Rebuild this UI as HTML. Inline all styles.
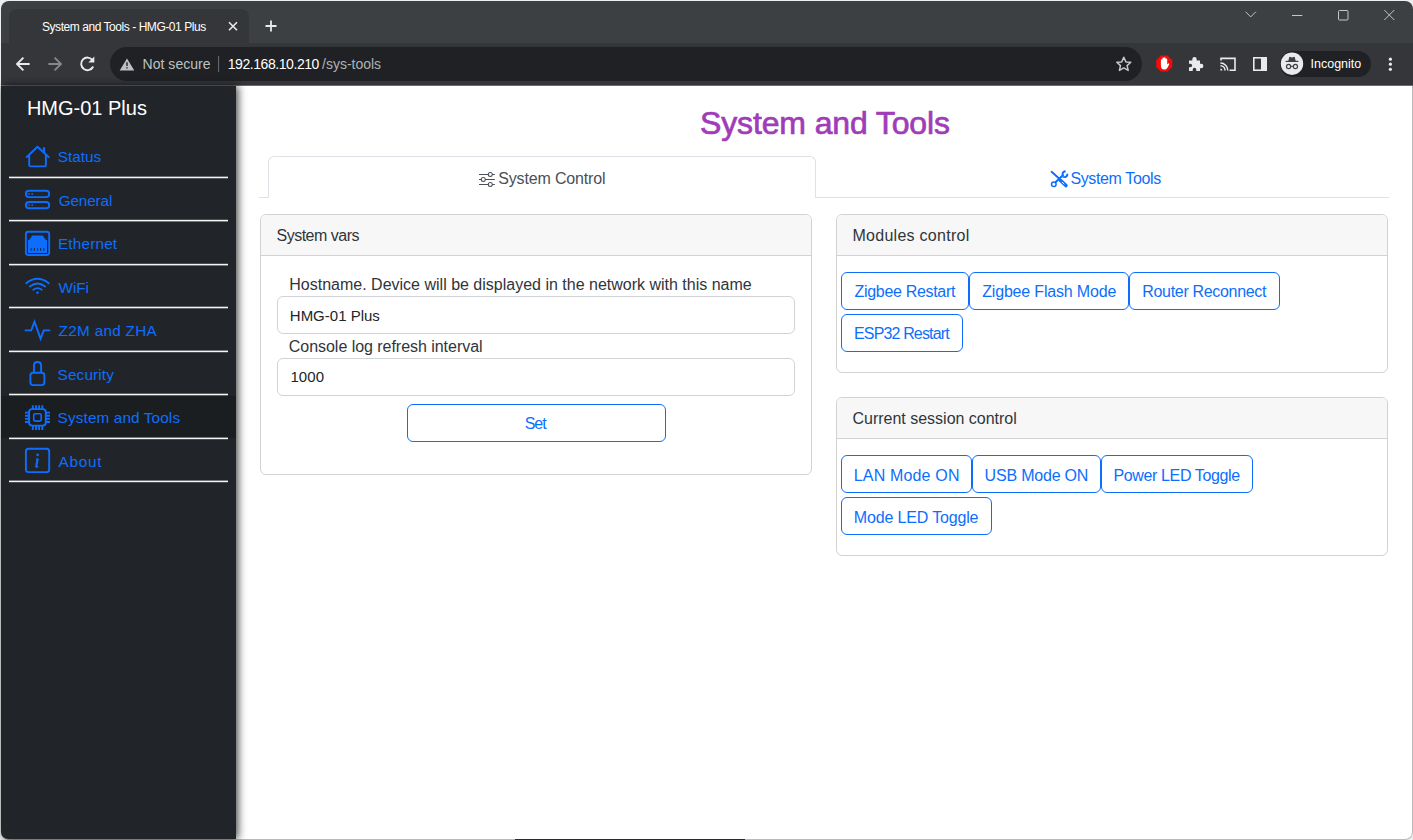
<!DOCTYPE html>
<html><head><meta charset="utf-8">
<style>
*{box-sizing:border-box;margin:0;padding:0}
html,body{width:1413px;height:840px;overflow:hidden;background:#eeeeee;font-family:"Liberation Sans",sans-serif;position:relative}
div,span{position:absolute}
.t{white-space:nowrap;line-height:1}
.nl{left:9px;width:219px;height:2px;background:#f0f0f0}
.card{border:1px solid #d2d2d2;border-radius:6px;background:#fff;overflow:hidden}
.hd{left:0;top:0;right:0;height:41px;background:#f7f7f7;border-bottom:1px solid #d2d2d2}
.btn{border:1px solid #0d6efd;border-radius:6px;height:38px}
.inp{border:1px solid #d0d4d8;border-radius:6px;background:#fff;height:38px}
</style></head><body>
<div style="left:1px;top:1px;width:1412px;height:85px;background:#3c4043;border-radius:8px 8px 0 0"></div>
<div style="left:9px;top:9px;width:240px;height:35px;background:#35363a;border-radius:8px 8px 0 0"></div>
<div style="left:1px;top:43px;width:1412px;height:42px;background:#35363a"></div>
<div style="left:110px;top:47px;width:1032px;height:34px;background:#202124;border-radius:17px"></div>
<div style="left:1280px;top:51px;width:91px;height:26px;background:#202124;border-radius:13px"></div>
<div style="left:1px;top:85px;width:1412px;height:1px;background:#686b70"></div>
<div style="left:1px;top:86px;width:1412px;height:754px;background:#fff;border-right:1px solid #b9b9b9;border-bottom:1px solid #b9b9b9;border-radius:0 0 8px 8px"></div>
<div style="left:515px;top:839px;width:230px;height:1px;background:#2a2a2e"></div>
<div style="left:1px;top:86px;width:235px;height:753px;background:#212529;box-shadow:2px 0 9px rgba(0,0,0,.75);border-radius:0 0 0 7px"></div>
<div style="left:1px;top:395.5px;width:235px;height:42.5px;background:#1b1e21"></div>
<svg width="240" height="500" viewBox="0 0 240 500" style="position:absolute;left:0;top:0"><g fill="#f4f4f4">
<rect x="9" y="176.65" width="219" height="1.6"/><rect x="9" y="219.8" width="219" height="1.6"/><rect x="9" y="263.8" width="219" height="1.6"/><rect x="9" y="306.7" width="219" height="1.6"/><rect x="9" y="350.6" width="219" height="1.6"/><rect x="9" y="393.7" width="219" height="1.6"/><rect x="9" y="437.6" width="219" height="1.6"/><rect x="9" y="480.6" width="219" height="1.6"/></g></svg>

<div style="left:259px;top:197px;width:1130px;height:1px;background:#dee2e6"></div>
<div style="left:268px;top:156px;width:548px;height:42px;border:1px solid #dee2e6;border-bottom:none;border-radius:6px 6px 0 0;background:#fff"></div>

<div class="card" style="left:260px;top:214px;width:552px;height:261px"><div class="hd"></div></div>
<div class="inp" style="left:277px;top:296px;width:518px"></div>
<div class="inp" style="left:277px;top:358px;width:518px"></div>
<div class="btn" style="left:407px;top:404px;width:259px"></div>

<div class="card" style="left:836px;top:214px;width:552px;height:159px"><div class="hd"></div></div>
<div class="btn" style="left:841px;top:272px;width:128px"></div>
<div class="btn" style="left:969px;top:272px;width:160px"></div>
<div class="btn" style="left:1129px;top:272px;width:151px"></div>
<div class="btn" style="left:841px;top:314px;width:122px"></div>

<div class="card" style="left:836px;top:397px;width:552px;height:159px"><div class="hd"></div></div>
<div class="btn" style="left:841px;top:455px;width:131px"></div>
<div class="btn" style="left:972px;top:455px;width:129px"></div>
<div class="btn" style="left:1101px;top:455px;width:152px"></div>
<div class="btn" style="left:841px;top:497px;width:151px"></div>

<span class="t" style="left:42.0px;top:20.6px;font-size:12px;letter-spacing:-0.448px;color:#fff;">System and Tools - HMG-01 Plus</span>
<span class="t" style="left:142.5px;top:57.2px;font-size:14px;letter-spacing:0.044px;color:#bdc1c6;">Not secure</span>
<span class="t" style="left:227.7px;top:57.3px;font-size:14px;letter-spacing:-0.431px;color:#fff;">192.168.10.210</span>
<span class="t" style="left:322.0px;top:57.3px;font-size:14px;letter-spacing:0.0px;color:#aeb2b6;">/sys-tools</span>
<span class="t" style="left:1310.5px;top:57.9px;font-size:12.5px;letter-spacing:0.0px;color:#fff;">Incognito</span>
<span class="t" style="left:26.9px;top:97.5px;font-size:20px;letter-spacing:0.0px;color:#fff;">HMG-01 Plus</span>
<span class="t" style="left:57.7px;top:149.0px;font-size:15.3px;letter-spacing:0.0px;color:#0d6efd;">Status</span>
<span class="t" style="left:58.7px;top:192.6px;font-size:15.3px;letter-spacing:-0.133px;color:#0d6efd;">General</span>
<span class="t" style="left:57.9px;top:236.0px;font-size:15.3px;letter-spacing:0.2px;color:#0d6efd;">Ethernet</span>
<span class="t" style="left:58.6px;top:279.9px;font-size:15.3px;letter-spacing:-0.133px;color:#0d6efd;">WiFi</span>
<span class="t" style="left:58.6px;top:323.2px;font-size:15.3px;letter-spacing:0.3px;color:#0d6efd;">Z2M and ZHA</span>
<span class="t" style="left:57.6px;top:366.8px;font-size:15.3px;letter-spacing:0.143px;color:#0d6efd;">Security</span>
<span class="t" style="left:57.6px;top:410.2px;font-size:15.3px;letter-spacing:0.133px;color:#0d6efd;">System and Tools</span>
<span class="t" style="left:58.6px;top:453.7px;font-size:15.3px;letter-spacing:0.75px;color:#0d6efd;">About</span>
<span class="t" style="left:700.0px;top:106.8px;font-size:32px;letter-spacing:-0.133px;color:#a03cb8;-webkit-text-stroke:0.7px #a03cb8">System and Tools</span>
<span class="t" style="left:498.2px;top:170.6px;font-size:16px;letter-spacing:-0.154px;color:#495057;">System Control</span>
<span class="t" style="left:1070.4px;top:171.0px;font-size:16px;letter-spacing:-0.364px;color:#0d6efd;">System Tools</span>
<span class="t" style="left:276.5px;top:227.7px;font-size:16px;letter-spacing:-0.5px;color:#30353a;">System vars</span>
<span class="t" style="left:289.3px;top:276.7px;font-size:16px;letter-spacing:0.0px;color:#30353a;">Hostname. Device will be displayed in the network with this name</span>
<span class="t" style="left:289.8px;top:307.5px;font-size:15px;letter-spacing:0.0px;color:#212529;">HMG-01 Plus</span>
<span class="t" style="left:288.8px;top:339.0px;font-size:16px;letter-spacing:-0.037px;color:#30353a;">Console log refresh interval</span>
<span class="t" style="left:290.4px;top:369.3px;font-size:15px;letter-spacing:0.133px;color:#212529;">1000</span>
<span class="t" style="left:524.7px;top:415.9px;font-size:16px;letter-spacing:-1.0px;color:#0d6efd;">Set</span>
<span class="t" style="left:852.5px;top:227.6px;font-size:16px;letter-spacing:0.271px;color:#30353a;">Modules control</span>
<span class="t" style="left:854.6px;top:283.9px;font-size:16px;letter-spacing:-0.323px;color:#0d6efd;">Zigbee Restart</span>
<span class="t" style="left:982.2px;top:283.9px;font-size:16px;letter-spacing:-0.175px;color:#0d6efd;">Zigbee Flash Mode</span>
<span class="t" style="left:1142.3px;top:283.9px;font-size:16px;letter-spacing:-0.32px;color:#0d6efd;">Router Reconnect</span>
<span class="t" style="left:854.0px;top:325.6px;font-size:16px;letter-spacing:-0.85px;color:#0d6efd;">ESP32 Restart</span>
<span class="t" style="left:852.5px;top:411.2px;font-size:16px;letter-spacing:-0.009px;color:#30353a;">Current session control</span>
<span class="t" style="left:853.8px;top:467.9px;font-size:16px;letter-spacing:0.16px;color:#0d6efd;">LAN Mode ON</span>
<span class="t" style="left:984.6px;top:467.9px;font-size:16px;letter-spacing:-0.2px;color:#0d6efd;">USB Mode ON</span>
<span class="t" style="left:1113.4px;top:467.9px;font-size:16px;letter-spacing:-0.36px;color:#0d6efd;">Power LED Toggle</span>
<span class="t" style="left:853.8px;top:509.6px;font-size:16px;letter-spacing:-0.157px;color:#0d6efd;">Mode LED Toggle</span>

<svg width="1413" height="840" viewBox="0 0 1413 840" style="position:absolute;left:0;top:0" fill="none">
 <!-- window controls -->
 <g stroke="#c4c7cc" stroke-width="1">
  <path d="M1245.5 11.7 L1250.7 16.9 L1255.9 11.7"/>
  <path d="M1292 15.5 H1302.3"/>
  <rect x="1338.5" y="10.5" width="9.5" height="9.5" rx="1"/>
  <path d="M1384.3 10 L1394.3 20 M1394.3 10 L1384.3 20"/>
 </g>
 <!-- tab close + new tab -->
 <g stroke="#e8eaed" stroke-width="1.6">
  <path d="M229 22.3 L237 30.3 M237 22.3 L229 30.3"/>
 </g>
 <g stroke="#e8eaed" stroke-width="1.8">
  <path d="M271 20.5 V31.5 M265.5 26 H276.5"/>
 </g>
 <!-- nav buttons -->
 <g stroke="#e8eaed" stroke-width="1.9" stroke-linecap="butt">
  <path d="M17 64 H29.7 M23.4 57.6 L17 64 L23.4 70.4"/>
 </g>
 <g stroke="#85878b" stroke-width="1.9">
  <path d="M48.4 64 H61 M54.6 57.6 L61 64 L54.6 70.4"/>
 </g>
 <g stroke="#e8eaed" stroke-width="1.9">
  <path d="M92.6 60.2 A6.3 6.3 0 1 0 93.2 66.5"/>
 </g>
 <path d="M94.3 56.6 V62.6 H88.3 Z" fill="#e8eaed"/>
 <!-- warning triangle -->
 <path d="M127 58.6 L134.3 70.4 H119.7 Z" fill="#bdc1c6"/>
 <path d="M126.3 62.3 H127.7 V66 H126.3 Z M126.3 67.2 H127.7 V68.6 H126.3 Z" fill="#202124"/>
 <path d="M218.6 56 V72" stroke="#6a6d72" stroke-width="1"/>
 <!-- star -->
 <path d="M1123.8 57.3 L1125.9 61.9 L1130.8 62.3 L1127.1 65.6 L1128.2 70.4 L1123.8 67.9 L1119.4 70.4 L1120.5 65.6 L1116.8 62.3 L1121.7 61.9 Z" stroke="#c4c7cc" stroke-width="1.5" stroke-linejoin="round"/>
 <!-- adblock octagon -->
 <path d="M1160.9 55.6 H1167.5 L1172.2 60.3 V66.9 L1167.5 71.6 H1160.9 L1156.2 66.9 V60.3 Z" fill="#f20d0d"/>
 <path transform="translate(2328.4 0) scale(-1 1)" d="M1161.2 64.5 V59.6 Q1161.2 58.6 1162 58.6 Q1162.8 58.6 1162.8 59.6 V63 V58.3 Q1162.8 57.3 1163.6 57.3 Q1164.4 57.3 1164.4 58.3 V63 V58.6 Q1164.4 57.6 1165.2 57.6 Q1166 57.6 1166 58.6 V63.3 V60 Q1166 59.2 1166.8 59.2 Q1167.5 59.2 1167.5 60 V65.5 Q1167.5 69.6 1164.2 69.6 Q1162 69.6 1160.8 67.4 L1159.3 64.4 Q1159 63.6 1159.7 63.4 Q1160.4 63.2 1160.8 64 Z" fill="#fff"/>
 <!-- puzzle -->
 <path d="M1189 60.5 H1192.3 V59.3 Q1192.3 57 1194.5 57 Q1196.7 57 1196.7 59.3 V60.5 H1200 V63.8 H1201.2 Q1203.4 63.8 1203.4 66 Q1203.4 68.2 1201.2 68.2 H1200 V71 H1196.3 V69.8 Q1196.3 67.8 1194.5 67.8 Q1192.7 67.8 1192.7 69.8 V71 H1189 V67.3 H1190.2 Q1192.2 67.3 1192.2 65.5 Q1192.2 63.7 1190.2 63.7 H1189 Z" fill="#e8eaed"/>
 <!-- cast -->
 <path d="M1221 60.5 V58.4 H1235 V70.3 H1229.5" stroke="#e8eaed" stroke-width="1.6"/>
 <path d="M1220.4 63 A7.4 7.4 0 0 1 1227.8 70.4 M1220.4 65.8 A4.6 4.6 0 0 1 1225 70.4" stroke="#e8eaed" stroke-width="1.5"/>
 <path d="M1220.4 68.4 A2 2 0 0 1 1222.4 70.4 H1220.4 Z" fill="#e8eaed"/>
 <!-- side panel -->
 <rect x="1253.8" y="57.8" width="12.4" height="12.4" stroke="#e8eaed" stroke-width="1.6"/>
 <rect x="1261" y="57.8" width="5.2" height="12.4" fill="#e8eaed"/>
 <!-- incognito avatar -->
 <circle cx="1292" cy="63.7" r="11.2" fill="#e8eaed"/>
 <path d="M1288.3 61 L1289.2 57.3 Q1289.5 56.6 1290.3 56.9 L1292 57.4 L1293.7 56.9 Q1294.5 56.6 1294.8 57.3 L1295.7 61 Z" fill="#3c4043"/>
 <path d="M1285.6 61.4 H1298.4" stroke="#3c4043" stroke-width="1.2"/>
 <circle cx="1288.6" cy="66.5" r="2.1" stroke="#3c4043" stroke-width="1.2"/>
 <circle cx="1295.4" cy="66.5" r="2.1" stroke="#3c4043" stroke-width="1.2"/>
 <path d="M1290.7 66.3 H1293.3" stroke="#3c4043" stroke-width="1"/>
 <!-- menu dots -->
 <g fill="#e8eaed"><circle cx="1390.4" cy="59.2" r="1.6"/><circle cx="1390.4" cy="64.2" r="1.6"/><circle cx="1390.4" cy="69.3" r="1.6"/></g>

 <!-- sidebar icons -->
 <g stroke="#0d6efd" stroke-width="1.9" stroke-linejoin="round" stroke-linecap="round">
  <path d="M26.8 157 L37.5 146.8 L48.6 157"/>
  <path d="M29.2 155.2 V165 Q29.2 166.4 30.6 166.4 H44.5 Q45.9 166.4 45.9 165 V155.2"/>
 </g>
 <path d="M42.9 147.3 H45.1 V153.4 L42.9 151.4 Z" fill="#0d6efd"/>
 <g stroke="#0d6efd" stroke-width="1.9">
  <rect x="25.9" y="190.8" width="23.3" height="6.3" rx="3.15"/>
  <rect x="25.9" y="202" width="23.3" height="6.3" rx="3.15"/>
 </g>
 <g fill="#0d6efd"><circle cx="29" cy="193.9" r="0.9"/><circle cx="32.2" cy="193.9" r="0.9"/><circle cx="29" cy="205.1" r="0.9"/><circle cx="32.2" cy="205.1" r="0.9"/></g>
 <rect x="25.9" y="231.7" width="23.3" height="23.3" rx="2.5" stroke="#0d6efd" stroke-width="1.9"/>
 <path d="M28 252.9 V240 H29.6 V238.3 H31.2 V237 Q31.5 235.6 33 235.6 H42 Q43.5 235.6 43.8 237 V238.3 H45.4 V240 H47 V252.9 Z" fill="#0d6efd"/>
 <g fill="#212529"><rect x="30.7" y="248.1" width="1" height="2.7"/><rect x="33.8" y="248.1" width="1" height="2.7"/><rect x="37" y="248.1" width="1" height="2.7"/><rect x="40.1" y="248.1" width="1" height="2.7"/><rect x="43.3" y="248.1" width="1" height="2.7"/></g>
 <g stroke="#0d6efd" stroke-width="1.9" stroke-linecap="round">
  <path d="M26.3 283.2 Q37.5 274.5 48.7 283.2"/>
  <path d="M29.9 286.4 Q37.5 280.6 45.1 286.4"/>
  <path d="M33.3 289.7 Q37.5 286.6 41.7 289.7"/>
 </g>
 <path d="M35.8 292 Q37.5 290.8 39.2 292 L37.5 294.4 Z" fill="#0d6efd"/>
 <path d="M25.5 330.4 H31.2 L34.5 321.8 L40.6 338.7 L43.8 330.4 H49.5" stroke="#0d6efd" stroke-width="1.9" stroke-linejoin="miter" stroke-linecap="round"/>
 <g stroke="#0d6efd" stroke-width="1.9">
  <rect x="30.4" y="372.8" width="14" height="12.3" rx="2.8"/>
  <path d="M34 372.8 V365.5 Q34 362 37.5 362 Q41.1 362 41.1 365.5 V372.8"/>
 </g>
 <g stroke="#0d6efd" stroke-width="1.9">
  <rect x="29.1" y="409.1" width="16.7" height="16.5" rx="3"/>
  <rect x="33.7" y="413.7" width="7.5" height="7.4" rx="1.5" stroke-width="1.6"/>
  <path d="M32.8 405.2 V409 M36 405.2 V409 M39.1 405.2 V409 M42.3 405.2 V409 M32.8 425.6 V430 M36 425.6 V430 M39.1 425.6 V430 M42.3 425.6 V430 M25 412.6 H29 M25 415.8 H29 M25 418.9 H29 M25 422 H29 M45.9 412.6 H50 M45.9 415.8 H50 M45.9 418.9 H50 M45.9 422 H50"/>
 </g>
 <rect x="25.9" y="448.8" width="23.3" height="23.3" rx="2.6" stroke="#0d6efd" stroke-width="1.9"/>
 <circle cx="37.6" cy="454.9" r="1.3" fill="#0d6efd"/>
 <path d="M36.3 458.4 H38.9 L37.4 465.6 Q37.3 466.3 38.3 466.1 L38.6 466 L38.3 467.2 Q36.5 467.9 35.6 467.5 Q34.9 467.1 35.2 466 L36.3 460.3 Q36.4 459.6 35.8 459.6 L36 458.4 Z" fill="#0d6efd"/>

 <!-- tab icons -->
 <g stroke="#495057" stroke-width="1.05">
  <path d="M479 174.4 H488.3 M492.3 174.4 H494.8 M479 179.4 H481.3 M485.3 179.4 H494.8 M479 184.4 H488.3 M492.3 184.4 H494.8"/>
  <circle cx="490.3" cy="174.4" r="2"/>
  <circle cx="483.3" cy="179.4" r="2"/>
  <circle cx="490.3" cy="184.4" r="2"/>
 </g>
 <path d="M1051.6 171.8 L1059.6 179" stroke="#0d6efd" stroke-width="1.9" stroke-linecap="round"/>
 <path d="M1060.3 180.3 L1065.9 185.5" stroke="#0d6efd" stroke-width="3.6" stroke-linecap="round"/>
 <path d="M1061.9 182 L1064.3 184.1" stroke="#fff" stroke-width="0.9"/>
 <path d="M1065.6 171.2 Q1063 171.4 1062.6 173.6 Q1062.5 174.6 1062.9 175.3 L1055.5 182.2" stroke="#0d6efd" stroke-width="2"/>
 <path d="M1067.4 173.8 Q1067.5 176.9 1064.5 177.1 Q1063.6 177.2 1063 176.6" stroke="#0d6efd" stroke-width="1.9"/>
 <circle cx="1053.8" cy="184.2" r="2.3" stroke="#0d6efd" stroke-width="1.5"/>
</svg>

</body></html>
